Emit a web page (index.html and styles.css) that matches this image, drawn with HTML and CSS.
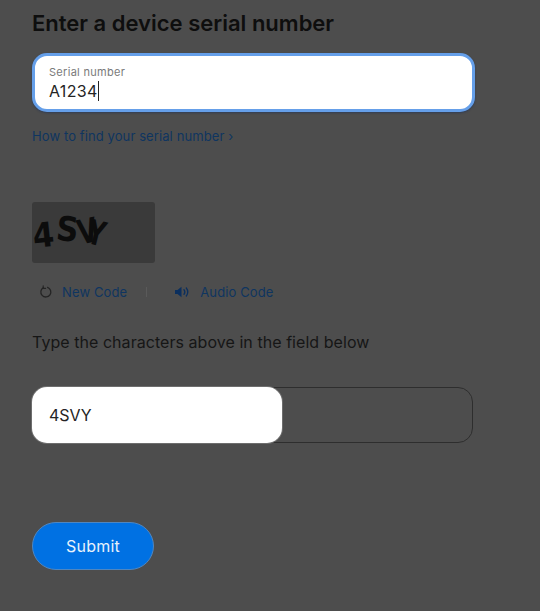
FILE: index.html
```html
<!DOCTYPE html>
<html lang="en">
<head>
  <meta charset="UTF-8">
  <title>Enter a device serial number</title>
  <link rel="stylesheet" href="styles.css">
</head>
<body>

  <main class="page">
    <h1 class="title">Enter a device serial number</h1>

    <div class="serial-field">
      <span class="serial-label">Serial number</span>
      <span class="serial-value">A1234<span class="caret"></span></span>
    </div>

    <a href="#" class="find-link">How to find your serial number ›</a>

    <div class="captcha">
      <span class="cap-4">4</span><span class="cap-s">S</span><span class="cap-v">V</span><span class="cap-y">Y</span>
    </div>

    <div class="captcha-actions">
      <a href="#" class="action">
        <svg class="icon" width="14" height="14" viewBox="0 0 14 14" fill="none">
          <path d="M8.6 2.3A5 5 0 1 1 4.4 2.6" stroke="#242424" stroke-width="1.3" stroke-linecap="round"/>
          <path d="M4.2 0.9V3.4H6.6" stroke="#242424" stroke-width="1.1" stroke-linecap="round"/>
        </svg>
        New Code
      </a>
      <span class="divider"></span>
      <a href="#" class="action">
        <svg class="icon" width="17" height="14" viewBox="0 0 17 14" fill="none">
          <path d="M1 5H3.5L7.5 1.8V12.2L3.5 9H1Z" fill="#0b2f5e"/>
          <path d="M10 4.6C11 6 11 8 10 9.4M12.3 3C14 5.3 14 8.7 12.3 11" stroke="#0b2f5e" stroke-width="1.3" stroke-linecap="round"/>
        </svg>
        Audio Code
      </a>
    </div>

    <p class="hint">Type the characters above in the field below</p>

    <div class="code-field">
      <div class="code-input">4SVY</div>
    </div>

    <button type="button" class="submit">Submit</button>
  </main>

</body>
</html>
```

FILE: styles.css
```css
* {
  margin: 0;
  padding: 0;
  box-sizing: border-box;
}

body {
  background-color: #4d4d4d;
  font-family: Inter, 'Liberation Sans', sans-serif;
  width: 540px;
  height: 611px;
  overflow: hidden;
}

.page {
  display: flex;
  flex-direction: column;
  align-items: flex-start;
  padding: 10px 0 0 32px;
}

.title {
  font-size: 22px;
  line-height: 26px;
  font-weight: 600;
  color: #0e0e0e;
}

.serial-field {
  width: 443px;
  height: 59px;
  margin-top: 17px;
  padding: 9px 14px;
  background-color: white;
  border: 3px solid #659fe9;
  border-radius: 15px;
  box-shadow: 0 1px 2px rgba(30, 50, 90, 0.6);
  display: flex;
  flex-direction: column;
  gap: 2px;
}

.serial-label {
  font-size: 11px;
  line-height: 14px;
  letter-spacing: 0.3px;
  color: #7a7a7a;
}

.serial-value {
  font-size: 16px;
  line-height: 20px;
  letter-spacing: 0.35px;
  color: #242424;
  display: flex;
  align-items: center;
}

.caret {
  width: 1px;
  height: 20px;
  background-color: #242424;
}

.find-link {
  margin-top: 15px;
  font-size: 13px;
  line-height: 18px;
  letter-spacing: 0.1px;
  color: #0f3560;
  text-decoration: none;
}

.captcha {
  width: 123px;
  height: 61px;
  margin-top: 57px;
  padding-top: 8px;
  background-color: #3a3a3a;
  border-radius: 3px;
  font-family: 'DejaVu Sans', sans-serif;
  font-size: 34px;
  font-weight: bold;
  line-height: 40px;
  color: #0c0c0c;
  white-space: nowrap;
}

.captcha span {
  display: inline-block;
}

.cap-4 {
  transform: rotate(-6deg) translateY(5px) scaleX(0.9);
  margin-left: -1px;
}

.cap-s {
  transform: rotate(6deg) translateY(-1px) scaleX(0.9);
  margin-left: 0;
}

.cap-v {
  transform: rotate(-12deg) translateY(1px) scaleX(0.75);
  margin-left: -5px;
}

.cap-y {
  transform: rotate(14deg) translateY(3px) scaleX(0.72);
  margin-left: -16px;
}

.captcha-actions {
  display: flex;
  align-items: center;
  margin-top: 20px;
  padding-left: 7px;
}

.action {
  display: flex;
  align-items: center;
  gap: 9px;
  font-size: 13px;
  line-height: 18px;
  letter-spacing: 0.12px;
  color: #0f3560;
  text-decoration: none;
}

.divider {
  width: 1px;
  height: 10px;
  background-color: #5a5a5a;
  margin: 0 27px 0 19px;
}

.hint {
  margin-top: 31px;
  font-size: 16px;
  line-height: 20px;
  letter-spacing: 0.05px;
  color: #161616;
}

.code-field {
  width: 441px;
  height: 56px;
  margin-top: 35px;
  border: 1px solid #2e2e2e;
  border-radius: 15px;
}

.code-input {
  width: 250px;
  height: 56px;
  margin: -1px 0 0 -1px;
  padding-left: 17px;
  background-color: white;
  border-radius: 15px;
  box-shadow: 0 0 0 1px #6e6e6e;
  font-size: 16px;
  line-height: 56px;
  color: #242424;
}

.submit {
  width: 122px;
  height: 48px;
  margin-top: 79px;
  background-color: #0071e3;
  border: 1px solid #4f86c0;
  border-radius: 24px;
  font-family: inherit;
  font-size: 16px;
  letter-spacing: 0.2px;
  color: #e8f2fc;
}
```
